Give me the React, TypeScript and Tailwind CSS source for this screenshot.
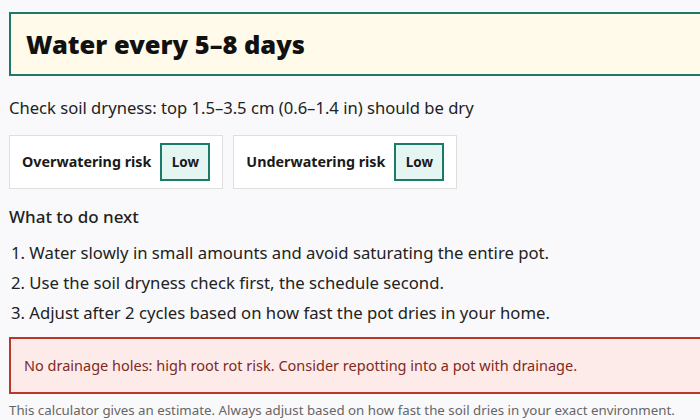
import React from "react";

const steps = [
  "Water slowly in small amounts and avoid saturating the entire pot.",
  "Use the soil dryness check first, the schedule second.",
  "Adjust after 2 cycles based on how fast the pot dries in your home.",
];

function RiskCard({ label, level }: { label: string; level: string }) {
  return (
    <div className="flex items-center gap-[9px] border border-[#dedede] bg-white h-[54px] pl-[12px] pr-[12px]">
      <span className="text-[14.3px] font-bold text-[#1a1a1a]">{label}</span>
      <span className="flex items-center justify-center w-[50px] h-[38px] border-2 border-[#1b7a68] bg-[#e5f6f2] text-[13.5px] font-bold text-[#1a1a1a]">
        {level}
      </span>
    </div>
  );
}

export default function App() {
  return (
    <div className="h-[420px] overflow-hidden bg-[#f9f9fb] text-[#222]" style={{ fontFamily: '"Noto Sans", "Open Sans", sans-serif' }}>
      <div className="w-[720px] pl-[9px] pt-[12px]">
        {/* Result banner */}
        <div className="h-[64px] border-2 border-[#1b7a68] bg-[#fffaea] flex items-center pl-[15px]">
          <h1 className="text-[25.5px] font-black text-[#111]">Water every 5–8 days</h1>
        </div>

        <p className="mt-[21px] text-[16.6px] leading-[22px] text-[#222]">
          Check soil dryness: top 1.5–3.5 cm (0.6–1.4 in) should be dry
        </p>

        <div className="mt-[16px] flex gap-[10px]">
          <RiskCard label="Overwatering risk" level="Low" />
          <RiskCard label="Underwatering risk" level="Low" />
        </div>

        <h2 className="mt-[17px] text-[17px] leading-[22px] font-medium text-[#222]">What to do next</h2>

        <ol className="mt-[10px] list-decimal list-inside pl-[2px] text-[16.7px] leading-[30px] text-[#222]">
          {steps.map((s) => (
            <li key={s}>{s}</li>
          ))}
        </ol>

        {/* Drainage warning */}
        <div className="mt-[9px] h-[57px] border-2 border-[#b8392c] bg-[#fdebea] flex items-center pl-[13px]">
          <span className="text-[14.5px] text-[#7e2a22]">
            No drainage holes: high root rot risk. Consider repotting into a pot with drainage.
          </span>
        </div>

        <p className="mt-[7px] text-[13.3px] leading-[18px] text-[#666]">
          This calculator gives an estimate. Always adjust based on how fast the soil dries in your exact environment.
        </p>
      </div>
    </div>
  );
}
